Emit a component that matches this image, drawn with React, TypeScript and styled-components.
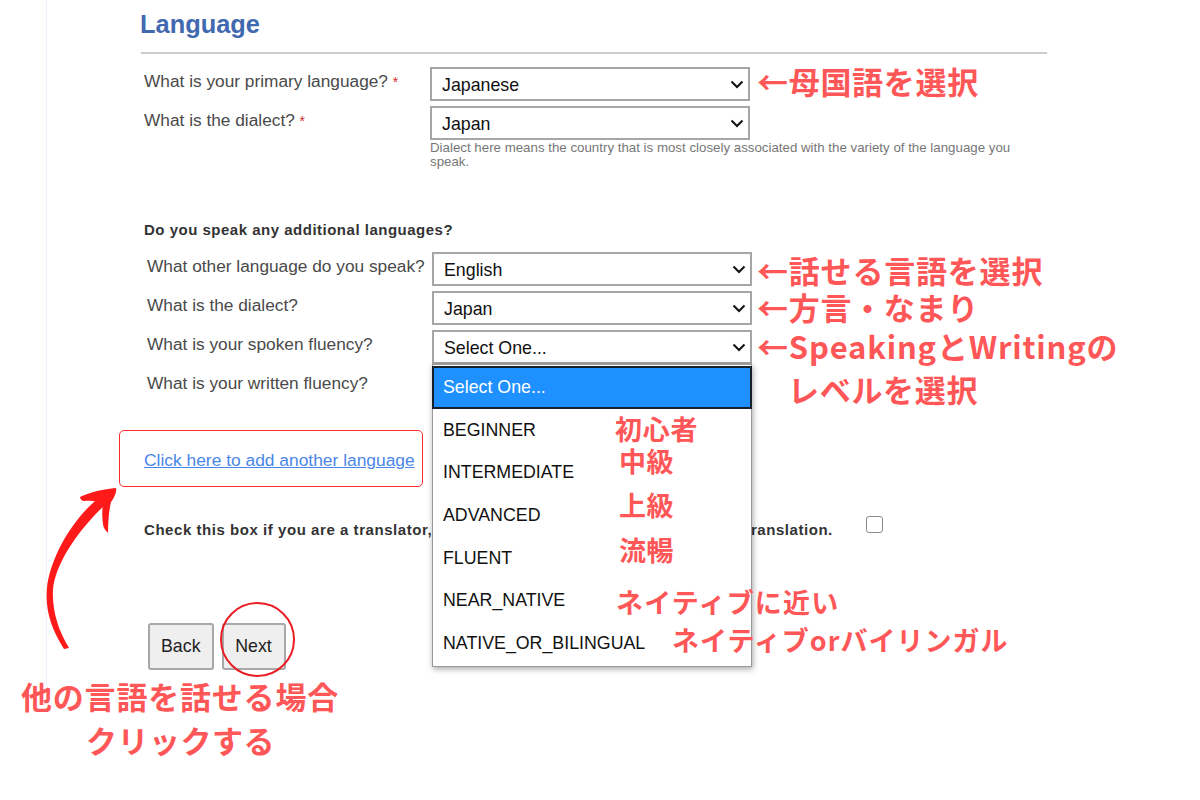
import React, { FC } from 'react';
import styled, { createGlobalStyle } from 'styled-components';

const FLUENCY = ['BEGINNER', 'INTERMEDIATE', 'ADVANCED', 'FLUENT', 'NEAR_NATIVE', 'NATIVE_OR_BILINGUAL'];

const CHEVRON =
  "data:image/svg+xml,%3Csvg xmlns='http://www.w3.org/2000/svg' width='14' height='9' viewBox='0 0 14 9'%3E%3Cpath d='M1.5 1.5 7 7l5.5-5.5' fill='none' stroke='%23111' stroke-width='2'/%3E%3C/svg%3E";

const NOTES = [
  { text: '←母国語を選択', x: 757, y: 65, size: 31, track: 0.7 },
  { text: '←話せる言語を選択', x: 757, y: 254, size: 31, track: 0.8 },
  { text: '←方言・なまり', x: 757, y: 291, size: 31, track: 0.7 },
  { text: '←SpeakingとWritingの', x: 757, y: 330, size: 31, track: 0.8 },
  { text: 'レベルを選択', x: 788, y: 373, size: 31, track: 0.7 },
  { text: '初心者', x: 615, y: 415, size: 27, track: 0.7 },
  { text: '中級', x: 619, y: 447, size: 27, track: 0.5 },
  { text: '上級', x: 619, y: 491, size: 27, track: 0.5 },
  { text: '流暢', x: 619, y: 536, size: 27, track: 0.5 },
  { text: 'ネイティブに近い', x: 616, y: 588, size: 27, track: 1.2 },
  { text: 'ネイティブorバイリンガル', x: 672, y: 626, size: 27, track: 1 },
  { text: '他の言語を話せる場合', x: 21, y: 680, size: 31, track: 0.8 },
  { text: 'クリックする', x: 86, y: 724, size: 31, track: 0.5 },
];

const App: FC = () => {
  return (
    <Shell>
      <GlobalStyle />
      <Main>
        <Heading>Language</Heading>

        <Primary>
          <Row $labelWidth={286}>
            <Label>
              What is your primary language? <Star>*</Star>
            </Label>
            <Select defaultValue="Japanese">
              <option>Japanese</option>
            </Select>
          </Row>
          <Row $labelWidth={286}>
            <Label>
              What is the dialect? <Star>*</Star>
            </Label>
            <Select defaultValue="Japan">
              <option>Japan</option>
            </Select>
          </Row>
          <Hint>
            Dialect here means the country that is most closely associated with the variety of the language you speak.
          </Hint>
        </Primary>

        <SectionTitle>Do you speak any additional languages?</SectionTitle>

        <Additional>
          <Row $labelWidth={285}>
            <Label>What other language do you speak?</Label>
            <Select defaultValue="English">
              <option>English</option>
            </Select>
          </Row>
          <Row $labelWidth={285}>
            <Label>What is the dialect?</Label>
            <Select defaultValue="Japan">
              <option>Japan</option>
            </Select>
          </Row>
          <Row $labelWidth={285}>
            <Label>What is your spoken fluency?</Label>
            <SelectWrap>
              <Select defaultValue="Select One...">
                <option>Select One...</option>
              </Select>
              <OptionList>
                <ActiveOption>Select One...</ActiveOption>
                {FLUENCY.map((name) => (
                  <OptionItem key={name}>{name}</OptionItem>
                ))}
              </OptionList>
            </SelectWrap>
          </Row>
          <Row $labelWidth={285}>
            <Label>What is your written fluency?</Label>
            <Select defaultValue="Select One...">
              <option>Select One...</option>
            </Select>
          </Row>
        </Additional>

        <LinkBox>
          <AddLink href="#">Click here to add another language</AddLink>
        </LinkBox>

        <CheckRow>
          <CheckText>Check this box if you are a translator, or have experience or formal training in translation.</CheckText>
          <CheckBox type="checkbox" />
        </CheckRow>

        <Buttons>
          <Button>Back</Button>
          <NextWrap>
            <Button>Next</Button>
            <Ring />
          </NextWrap>
        </Buttons>
      </Main>

      <CurveArrow viewBox="0 0 100 180" aria-hidden="true">
        <path d="M24 169 C11 148 5 130 7 108 C9 84 28 42 60 17 L66 24 C38 50 15 84 13 110 C12 130 18 150 29 168 Z" />
        <path d="M40 17 C50 12 64 9 76 8 C77 12 74 18 71 22 C69 30 68 42 68 53 C65 50 63 47 63 44 C62 37 62 30 63 24 C58 21 50 20 44 21 C42 21 40 19 40 17 Z" />
      </CurveArrow>

      {NOTES.map((note) => (
        <Note key={note.text} $x={note.x} $y={note.y} $size={note.size} $track={note.track}>
          {note.text}
        </Note>
      ))}
    </Shell>
  );
};

export default App;

const GlobalStyle = createGlobalStyle`
  html, body {
    margin: 0;
    padding: 0;
    background: #fff;
  }
  * {
    box-sizing: border-box;
  }
`;

const Shell = styled.div`
  position: relative;
  width: 1200px;
  height: 800px;
  overflow: hidden;
  font-family: 'Liberation Sans', Arial, sans-serif;
`;

const Main = styled.main`
  width: 1001px;
  height: 686px;
  margin-left: 46px;
  padding-left: 94px;
  border-left: 1px solid #eaf3fb;
  color: #4a4a4a;
`;

const Heading = styled.h1`
  width: 906px;
  height: 54px;
  margin: 0;
  padding-top: 9px;
  border-bottom: 2px solid #ccc;
  font-size: 25.4px;
  line-height: 30px;
  font-weight: 700;
  text-indent: -1px;
  color: #4169b0;
`;

const Primary = styled.section`
  display: flex;
  flex-direction: column;
  row-gap: 5px;
  margin-top: 13px;
  padding-left: 3px;
`;

const Additional = styled.section`
  display: flex;
  flex-direction: column;
  row-gap: 5px;
  margin-top: 13px;
  padding-left: 6px;
`;

const Row = styled.div<{ $labelWidth: number }>`
  display: grid;
  grid-template-columns: ${(p) => p.$labelWidth}px 320px;
  align-items: start;
`;

const Label = styled.label`
  padding-top: 4px;
  font-size: 17.3px;
  line-height: 20px;
  white-space: nowrap;
`;

const Star = styled.span`
  font-size: 14px;
  color: #d42a2a;
`;

const Select = styled.select`
  display: block;
  width: 320px;
  height: 34px;
  padding: 4px 6px 3px 10px;
  border: 2px solid #a6a6a6;
  border-radius: 0;
  appearance: none;
  background: #fff url("${CHEVRON}") no-repeat right 4px center;
  font-family: 'Liberation Sans', Arial, sans-serif;
  font-size: 17.8px;
  color: #111;
`;

const SelectWrap = styled.div`
  position: relative;
  width: 320px;
`;

const OptionList = styled.ul`
  position: absolute;
  z-index: 2;
  top: 34px;
  left: 0;
  width: 320px;
  height: 303px;
  margin: 0;
  padding: 1px 0 0;
  list-style: none;
  background: #fff;
  border: 1px solid #9a9a9a;
  box-shadow: 1px 2px 6px rgba(0, 0, 0, 0.35);
`;

const OptionItem = styled.li`
  display: flex;
  align-items: center;
  height: 42.7px;
  padding-left: 10px;
  font-size: 17.8px;
  color: #111;
`;

const ActiveOption = styled(OptionItem)`
  margin: 0 0 0 -1px;
  width: 320px;
  padding-left: 9px;
  background: #1e90ff;
  border: 2px solid #15202b;
  color: #fff;
`;

const Hint = styled.p`
  width: 600px;
  margin: -4px 0 0 286px;
  font-size: 13.3px;
  line-height: 14px;
  color: #777;
`;

const SectionTitle = styled.h2`
  margin: 52px 0 0 3px;
  font-size: 15px;
  letter-spacing: 0.5px;
  line-height: 18px;
  font-weight: 700;
  color: #333;
`;

const LinkBox = styled.div`
  display: flex;
  align-items: center;
  width: 304px;
  height: 57px;
  margin: 27px 0 0 -22px;
  padding-left: 24px;
  border: 1px solid #ff2b2b;
  border-radius: 5px;
`;

const AddLink = styled.a`
  margin-top: 3px;
  font-size: 17.4px;
  white-space: nowrap;
  color: #4a86e8;
`;

const CheckRow = styled.div`
  display: flex;
  align-items: flex-start;
  margin: 29px 0 0 3px;
`;

const CheckText = styled.p`
  width: 722px;
  margin: 0;
  font-size: 15px;
  letter-spacing: 0.55px;
  line-height: 28px;
  font-weight: 700;
  color: #333;
  white-space: nowrap;
`;

const CheckBox = styled.input`
  appearance: none;
  width: 17px;
  height: 17px;
  margin: 0;
  border: 1px solid #8a8a8a;
  border-radius: 3px;
  background: #fff;
`;

const Buttons = styled.div`
  display: flex;
  column-gap: 8px;
  margin: 79px 0 0 7px;
`;

const NextWrap = styled.div`
  position: relative;
`;

const Button = styled.button`
  min-width: 64px;
  height: 47px;
  padding: 0 11px;
  background: #efefef;
  border: 2px solid #a8a8a8;
  border-radius: 3px;
  font-family: 'Liberation Sans', Arial, sans-serif;
  font-size: 17.8px;
  color: #222;
`;

const Ring = styled.span`
  position: absolute;
  top: -21px;
  left: -2px;
  width: 75px;
  height: 75px;
  border: 2px solid #ea1c24;
  border-radius: 50%;
`;

const CurveArrow = styled.svg`
  position: absolute;
  left: 40px;
  top: 480px;
  width: 100px;
  height: 180px;
  fill: #ff1a1a;
`;

const Note = styled.span<{ $x: number; $y: number; $size: number; $track: number }>`
  position: absolute;
  z-index: 3;
  left: ${(p) => p.$x}px;
  top: ${(p) => p.$y}px;
  font-family: 'Noto Sans CJK JP', 'Liberation Sans', sans-serif;
  font-size: ${(p) => p.$size}px;
  letter-spacing: ${(p) => p.$track}px;
  line-height: 1;
  font-weight: 700;
  color: #ff5757;
  white-space: nowrap;
`;
